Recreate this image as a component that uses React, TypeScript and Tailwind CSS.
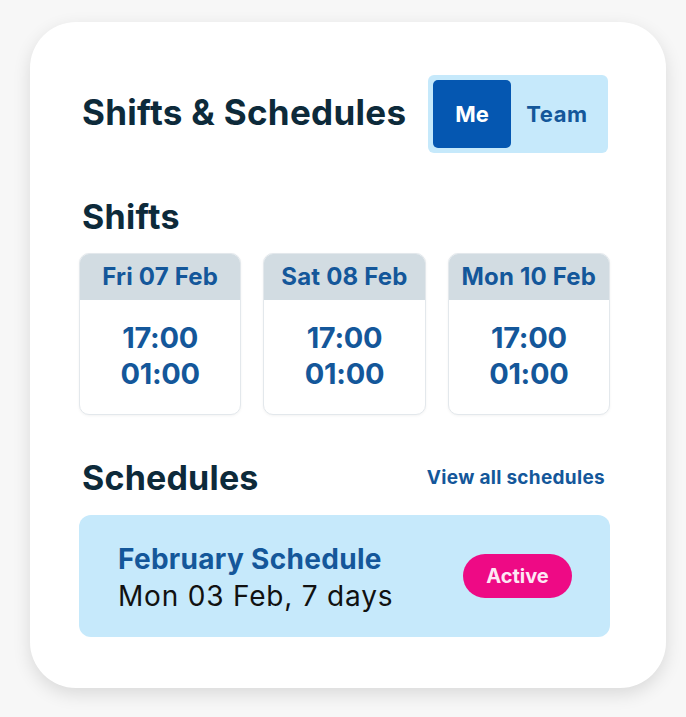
import React from 'react';

const shifts = [
    { day: 'Fri 07 Feb', start: '17:00', end: '01:00' },
    { day: 'Sat 08 Feb', start: '17:00', end: '01:00' },
    { day: 'Mon 10 Feb', start: '17:00', end: '01:00' },
];

const App: React.FC = () => {
    return (
        <div className="min-h-[717px] w-full bg-[#f7f7f7] pt-[22px] font-['Inter',sans-serif]">
            <div className="ml-[30px] h-[666px] w-[636px] rounded-[46px] bg-white pt-[53px] pl-[49px] pr-[56px] shadow-[0_6px_18px_rgba(0,0,0,0.12)]">
                <div className="flex items-center justify-between">
                    <h1 className="ml-[3px] -mt-[3px] text-[35px] font-bold leading-none tracking-[0.3px] text-[#0d2a3a]">
                        Shifts &amp; Schedules
                    </h1>
                    <div className="mr-[2px] flex h-[78px] w-[180px] rounded-[6px] bg-[#c6e9fb] p-[5px]">
                        <button className="h-full w-[78px] rounded-[5px] bg-[#0557b1] text-[22px] font-bold text-white">
                            Me
                        </button>
                        <button className="flex-1 text-[22px] font-bold tracking-[0.6px] text-[#14579a]">Team</button>
                    </div>
                </div>

                <h2 className="mt-[46px] ml-[3px] text-[34px] font-bold leading-[36px] tracking-[0.3px] text-[#0d2a3a]">
                    Shifts
                </h2>

                <div className="mt-[18px] grid grid-cols-3 gap-[22px]">
                    {shifts.map((s) => (
                        <div
                            key={s.day}
                            className="h-[162px] overflow-hidden rounded-[10px] border border-[#e3e8ec] bg-white shadow-[0_1px_3px_rgba(0,0,0,0.05)]"
                        >
                            <div className="flex h-[46px] items-center justify-center bg-[#d2dce2] text-[24px] font-bold tracking-[0.2px] text-[#14579a]">
                                {s.day}
                            </div>
                            <div className="flex flex-col items-center pt-[20px] text-[29px] font-bold leading-[36px] tracking-[-0.3px] text-[#14579a]">
                                <span>{s.start}</span>
                                <span>{s.end}</span>
                            </div>
                        </div>
                    ))}
                </div>

                <div className="mt-[43px] flex items-center justify-between">
                    <h2 className="ml-[3px] text-[34px] font-bold leading-[40px] tracking-[0.2px] text-[#0d2a3a]">
                        Schedules
                    </h2>
                    <a href="#" className="mr-[5px] text-[19px] font-bold tracking-[0.3px] text-[#14579a]">
                        View all schedules
                    </a>
                </div>

                <div className="mt-[17px] flex h-[122px] items-center justify-between rounded-[12px] bg-[#c6e9fb] pl-[39px] pr-[38px]">
                    <div className="flex flex-col pt-[4px]">
                        <span className="text-[28px] font-bold leading-[36px] tracking-[0.3px] text-[#14579a]">
                            February Schedule
                        </span>
                        <span className="text-[28px] leading-[38px] tracking-[0.8px] text-[#111111]">
                            Mon 03 Feb, 7 days
                        </span>
                    </div>
                    <span className="flex h-[44px] w-[109px] items-center justify-center rounded-full bg-[#ee0a85] text-[20px] font-bold text-[#fde8f4]">
                        Active
                    </span>
                </div>
            </div>
        </div>
    );
};

export default App;
